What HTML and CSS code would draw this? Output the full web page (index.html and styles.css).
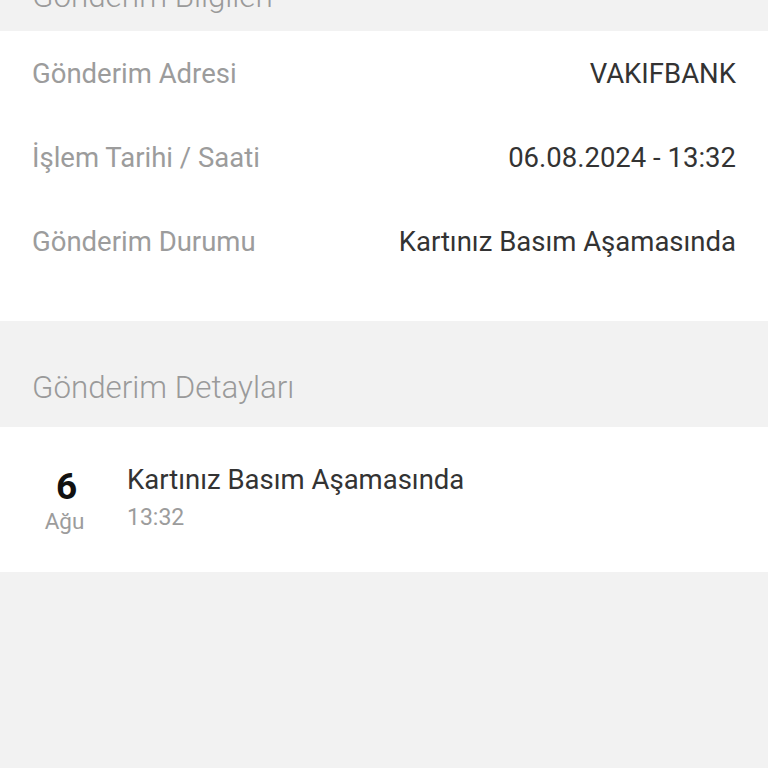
FILE: index.html
```html
<!DOCTYPE html>
<html lang="tr">
<head>
    <meta charset="UTF-8">
    <meta name="viewport" content="width=device-width, initial-scale=1.0">
    <title>Gönderim Bilgileri</title>
    <link rel="stylesheet" href="styles.css">
</head>
<body>
    <div class="page">
        <div class="section-header section-header--top">Gönderim Bilgileri</div>

        <div class="info-card">
            <div class="info-row">
                <span class="info-label">Gönderim Adresi</span>
                <span class="info-value">VAKIFBANK</span>
            </div>
            <div class="info-row">
                <span class="info-label">İşlem Tarihi / Saati</span>
                <span class="info-value">06.08.2024 - 13:32</span>
            </div>
            <div class="info-row">
                <span class="info-label">Gönderim Durumu</span>
                <span class="info-value">Kartınız Basım Aşamasında</span>
            </div>
        </div>

        <div class="section-header">Gönderim Detayları</div>

        <div class="detail-card">
            <div class="detail-row">
                <div class="detail-date">
                    <span class="detail-day">6</span>
                    <span class="detail-month">Ağu</span>
                </div>
                <div class="detail-text">
                    <span class="detail-title">Kartınız Basım Aşamasında</span>
                    <span class="detail-time">13:32</span>
                </div>
            </div>
        </div>
    </div>
</body>
</html>
```

FILE: styles.css
```css
body {
    margin: 0;
    background: #f2f2f2;
    font-family: Roboto, "Noto Sans", Arial, sans-serif;
    color: #333;
    overflow: hidden;
}

.page {
    display: flex;
    flex-direction: column;
}

.section-header {
    height: 106px;
    box-sizing: border-box;
    padding: 47px 32px 0;
    font-size: 31.3px;
    font-weight: 300;
    line-height: 40px;
    color: #9a9a9a;
    white-space: nowrap;
}

.section-header--top {
    height: 101px;
    margin-top: -70px;
}

.info-card {
    background: #fff;
    padding: 0 32px 38px;
}

.info-row {
    height: 84px;
    display: flex;
    justify-content: space-between;
    align-items: center;
    font-size: 27.5px;
}

.info-label {
    color: #9c9c9c;
}

.info-value {
    color: #333;
}

.detail-card {
    background: #fff;
    height: 145px;
}

.detail-row {
    display: flex;
    align-items: flex-start;
    padding-top: 36px;
}

.detail-date {
    width: 127px;
    padding-left: 6px;
    box-sizing: border-box;
    display: flex;
    flex-direction: column;
    align-items: center;
}

.detail-day {
    font-size: 37px;
    font-weight: 700;
    line-height: 42px;
    color: #111;
    margin-top: 3px;
}

.detail-month {
    font-size: 22.5px;
    line-height: 26px;
    color: #9c9c9c;
    margin-top: 0;
    margin-right: 4px;
}

.detail-text {
    display: flex;
    flex-direction: column;
}

.detail-title {
    font-size: 27.5px;
    line-height: 34px;
    color: #333;
}

.detail-time {
    font-size: 23px;
    line-height: 28px;
    color: #9c9c9c;
    margin-top: 7px;
}
```
